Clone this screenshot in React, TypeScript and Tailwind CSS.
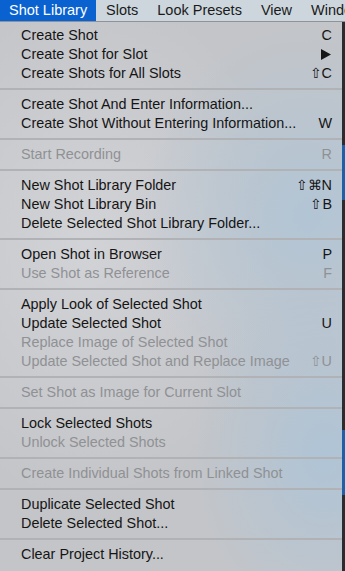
type Item = { label: string; key?: string; disabled?: boolean };

const groups: Item[][] = [
  [
    { label: 'Create Shot', key: 'C' },
    { label: 'Create Shot for Slot', key: 'arrow' },
    { label: 'Create Shots for All Slots', key: '⇧C' },
  ],
  [
    { label: 'Create Shot And Enter Information...' },
    { label: 'Create Shot Without Entering Information...', key: 'W' },
  ],
  [{ label: 'Start Recording', key: 'R', disabled: true }],
  [
    { label: 'New Shot Library Folder', key: '⇧⌘N' },
    { label: 'New Shot Library Bin', key: '⇧B' },
    { label: 'Delete Selected Shot Library Folder...' },
  ],
  [
    { label: 'Open Shot in Browser', key: 'P' },
    { label: 'Use Shot as Reference', key: 'F', disabled: true },
  ],
  [
    { label: 'Apply Look of Selected Shot' },
    { label: 'Update Selected Shot', key: 'U' },
    { label: 'Replace Image of Selected Shot', disabled: true },
    { label: 'Update Selected Shot and Replace Image', key: '⇧U', disabled: true },
  ],
  [{ label: 'Set Shot as Image for Current Slot', disabled: true }],
  [
    { label: 'Lock Selected Shots' },
    { label: 'Unlock Selected Shots', disabled: true },
  ],
  [{ label: 'Create Individual Shots from Linked Shot', disabled: true }],
  [
    { label: 'Duplicate Selected Shot' },
    { label: 'Delete Selected Shot...' },
  ],
  [{ label: 'Clear Project History...' }],
];

const menus = ['Slots', 'Look Presets', 'View', 'Window'];

function Row({ item }: { item: Item }) {
  return (
    <div
      className={
        'flex h-[19px] items-center justify-between pl-[21px] pr-[10px] ' +
        (item.disabled ? 'text-[#8f9194]' : 'text-[#151515]')
      }
    >
      <span>{item.label}</span>
      {item.key === 'arrow' ? (
        <svg width="10" height="11" viewBox="0 0 10 11" className="mr-[1px]">
          <path d="M0 0 L10 5.5 L0 11 Z" fill="#151515" />
        </svg>
      ) : item.key ? (
        <span>{item.key}</span>
      ) : null}
    </div>
  );
}

export default function App() {
  return (
    <div
      className="relative h-[571px] w-[345px] overflow-hidden bg-[#1e1f22] text-[14.4px]"
      style={{ fontFamily: '"Liberation Sans", Arial, sans-serif' }}
    >
      <div className="flex h-[22px] items-center overflow-hidden whitespace-nowrap border-b border-[#8d9398] bg-[#cdd6dd] text-[14.5px] text-[#1a1a1a]">
        <div className="flex h-full w-[96px] shrink-0 items-center bg-[#0a62d0] pl-[9px] text-white">
          Shot Library
        </div>
        <div className="flex shrink-0 items-center gap-[19px] pl-[10px]">
          {menus.map((m) => (
            <div key={m} className="shrink-0">
              {m}
            </div>
          ))}
        </div>
      </div>

      <div className="flex">
        <div className="relative z-10 w-[342px] rounded-b-[5px] bg-[#c4c5c8] bg-[radial-gradient(ellipse_at_90%_35%,#b2c5d5_0%,rgba(178,197,213,0)_40%),radial-gradient(ellipse_at_95%_78%,#afc4d6_0%,rgba(175,196,214,0)_30%),radial-gradient(ellipse_at_25%_40%,#d2d3d7_0%,rgba(210,211,215,0)_55%)] pb-[3px] pt-[4px]">
          {groups.map((g, i) => (
            <div key={i}>
              {i > 0 ? (
                <div className="flex h-[12px] items-center">
                  <div className="h-[2px] w-full bg-[#b0b2b5]" />
                </div>
              ) : null}
              {g.map((item) => (
                <Row key={item.label} item={item} />
              ))}
            </div>
          ))}
        </div>
        <div className="flex w-[3px] flex-col">
          <div className="h-[123px] bg-[#2a2c30]" />
          <div className="h-[55px] bg-[#1f5fa8]" />
          <div className="h-[230px] bg-[#2a2c30]" />
          <div className="h-[65px] bg-[#1f5fa8]" />
          <div className="h-[80px] bg-[#2a2c30]" />
        </div>
      </div>

      <div className="absolute bottom-[-14px] left-[8px] h-[20px] w-[20px] rounded-full border-[3px] border-[#c43fcf]" />
      <div className="absolute bottom-[-14px] left-[105px] h-[20px] w-[20px] rounded-full border-[3px] border-[#c8382c]" />
      <div className="absolute bottom-[-14px] left-[160px] h-[20px] w-[20px] rounded-full border-[3px] border-[#c43fcf]" />
      <div className="absolute bottom-[-14px] left-[255px] h-[20px] w-[20px] rounded-full border-[3px] border-[#c8382c]" />
      <div className="absolute bottom-[-14px] left-[310px] h-[20px] w-[20px] rounded-full border-[3px] border-[#c43fcf]" />
    </div>
  );
}
